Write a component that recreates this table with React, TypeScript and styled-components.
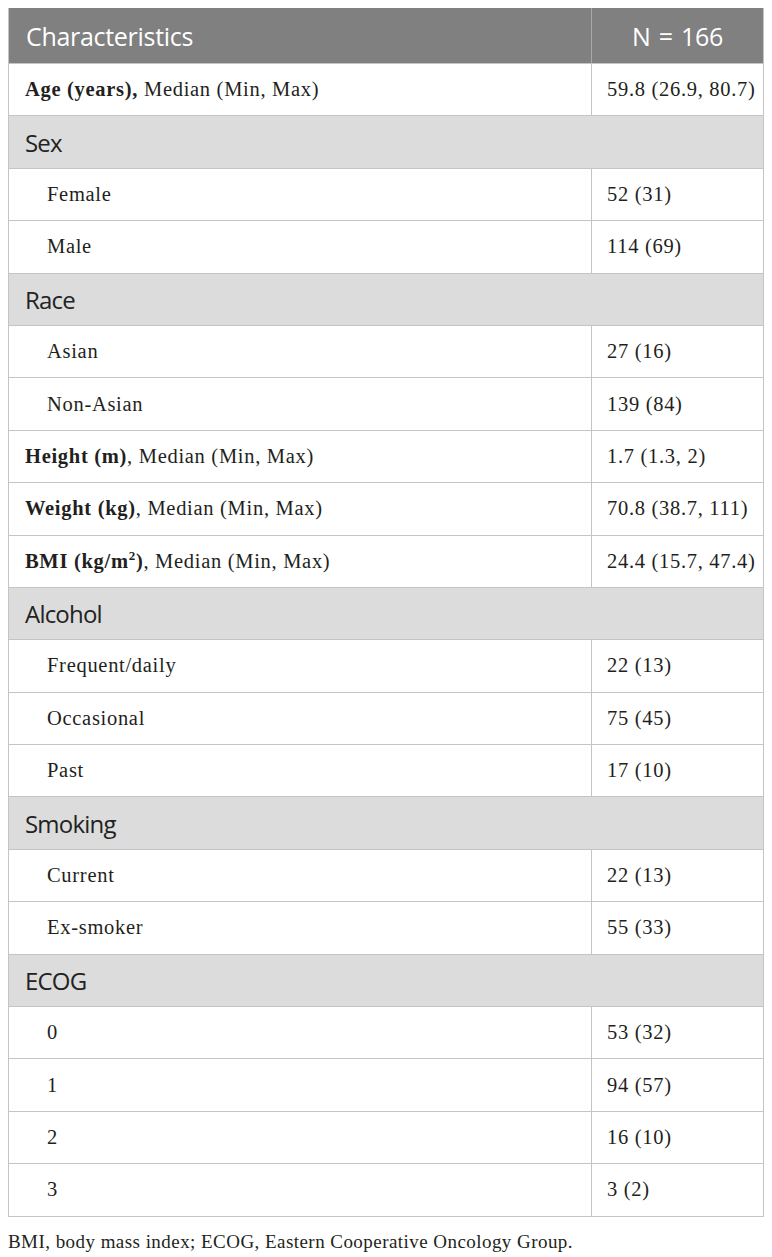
import React from 'react';
import styled, { createGlobalStyle } from 'styled-components';

const GlobalStyle = createGlobalStyle`
  body {
    margin: 8px;
    background: #ffffff;
  }
`;

const Table = styled.div`
  width: 756px;
  border: 1px solid #c4c4c4;
  border-top: none;
  box-sizing: border-box;
`;

const Row = styled.div<{ $kind?: 'head' | 'section' | 'data' }>`
  display: grid;
  grid-template-columns: 582px 1fr;
  height: ${({ $kind }) => ($kind === 'head' ? '55px' : '52.4px')};
  box-sizing: border-box;
  border-top: ${({ $kind }) => ($kind === 'head' ? 'none' : '1px solid #c4c4c4')};
  background: ${({ $kind }) =>
    $kind === 'head' ? '#808080' : $kind === 'section' ? '#dcdcdc' : '#ffffff'};
`;

const HeadCell = styled.div<{ $center?: boolean }>`
  display: flex;
  align-items: center;
  justify-content: ${({ $center }) => ($center ? 'center' : 'flex-start')};
  padding-left: ${({ $center }) => ($center ? '0' : '17px')};
  font-family: 'Open Sans', 'Noto Sans', sans-serif;
  font-size: 25px;
  letter-spacing: -0.3px;
  word-spacing: 2px;
  color: #ffffff;
  & + & {
    border-left: 1px solid #a8a8a8;
  }
`;

const SectionCell = styled.div`
  grid-column: 1 / span 2;
  display: flex;
  align-items: center;
  padding-left: 16px;
  font-family: 'Open Sans', 'Noto Sans', sans-serif;
  font-size: 24px;
  letter-spacing: -0.8px;
  color: #222222;
`;

const Cell = styled.div<{ $indent?: boolean }>`
  display: flex;
  align-items: center;
  padding-left: ${({ $indent }) => ($indent ? '38px' : '16px')};
  font-family: 'Liberation Serif', 'Times New Roman', serif;
  font-size: 20.5px;
  letter-spacing: 0.7px;
  color: #231f20;
  & + & {
    border-left: 1px solid #c4c4c4;
    padding-left: 15px;
  }
  b sup {
    font-size: 13px;
    line-height: 0;
  }
`;

const Note = styled.p`
  margin: 0;
  padding-top: 14px;
  font-family: 'Liberation Serif', 'Times New Roman', serif;
  font-size: 19px;
  letter-spacing: 0.45px;
  color: #231f20;
`;

type Item =
  | { kind: 'section'; label: string }
  | { kind: 'data'; label: React.ReactNode; value: string; indent?: boolean };

const items: Item[] = [
  { kind: 'data', label: <><b>Age (years),</b> Median (Min, Max)</>, value: '59.8 (26.9, 80.7)' },
  { kind: 'section', label: 'Sex' },
  { kind: 'data', label: 'Female', value: '52 (31)', indent: true },
  { kind: 'data', label: 'Male', value: '114 (69)', indent: true },
  { kind: 'section', label: 'Race' },
  { kind: 'data', label: 'Asian', value: '27 (16)', indent: true },
  { kind: 'data', label: 'Non-Asian', value: '139 (84)', indent: true },
  { kind: 'data', label: <><b>Height (m)</b>, Median (Min, Max)</>, value: '1.7 (1.3, 2)' },
  { kind: 'data', label: <><b>Weight (kg)</b>, Median (Min, Max)</>, value: '70.8 (38.7, 111)' },
  { kind: 'data', label: <><b>BMI (kg/m<sup>2</sup>)</b>, Median (Min, Max)</>, value: '24.4 (15.7, 47.4)' },
  { kind: 'section', label: 'Alcohol' },
  { kind: 'data', label: 'Frequent/daily', value: '22 (13)', indent: true },
  { kind: 'data', label: 'Occasional', value: '75 (45)', indent: true },
  { kind: 'data', label: 'Past', value: '17 (10)', indent: true },
  { kind: 'section', label: 'Smoking' },
  { kind: 'data', label: 'Current', value: '22 (13)', indent: true },
  { kind: 'data', label: 'Ex-smoker', value: '55 (33)', indent: true },
  { kind: 'section', label: 'ECOG' },
  { kind: 'data', label: '0', value: '53 (32)', indent: true },
  { kind: 'data', label: '1', value: '94 (57)', indent: true },
  { kind: 'data', label: '2', value: '16 (10)', indent: true },
  { kind: 'data', label: '3', value: '3 (2)', indent: true },
];

export default function App() {
  return (
    <>
      <GlobalStyle />
      <Table>
        <Row $kind="head">
          <HeadCell>Characteristics</HeadCell>
          <HeadCell $center>N = 166</HeadCell>
        </Row>
        {items.map((it, i) =>
          it.kind === 'section' ? (
            <Row key={i} $kind="section">
              <SectionCell>{it.label}</SectionCell>
            </Row>
          ) : (
            <Row key={i} $kind="data">
              <Cell $indent={it.indent}>
                <span>{it.label}</span>
              </Cell>
              <Cell>
                <span>{it.value}</span>
              </Cell>
            </Row>
          )
        )}
      </Table>
      <Note>BMI, body mass index; ECOG, Eastern Cooperative Oncology Group.</Note>
    </>
  );
}
